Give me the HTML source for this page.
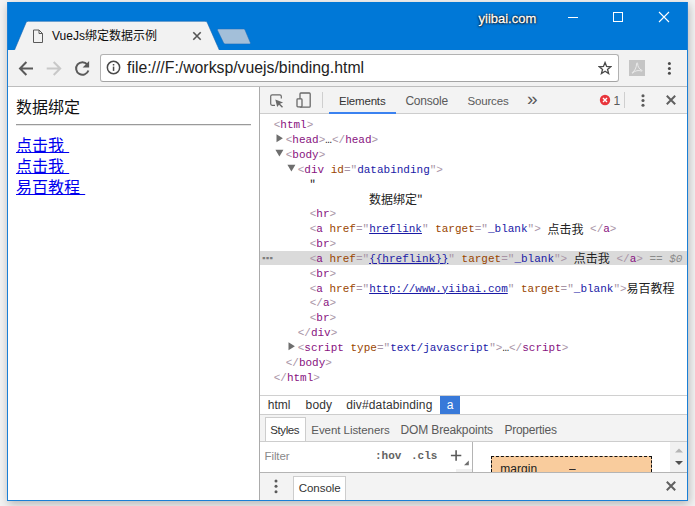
<!DOCTYPE html>
<html>
<head>
<meta charset="utf-8">
<title>VueJs绑定数据示例</title>
<style>
html,body{margin:0;padding:0;}
body{width:695px;height:506px;overflow:hidden;background:#f3f3f3;position:relative;
  font-family:"Liberation Sans","Noto Sans CJK SC",sans-serif;}
*{box-sizing:border-box;}
.abs{position:absolute;}
#shadow{position:absolute;left:7px;top:2px;width:681px;height:499px;box-shadow:1px 3px 9px 0px rgba(0,0,0,0.26);}
#win{position:absolute;left:7px;top:2px;width:681px;height:499px;background:#fff;border:1px solid #1a7fd6;border-top:none;overflow:hidden;}
#titlebar{position:absolute;left:-1px;top:0;width:681px;height:48px;background:#0078d7;}
#toolbar{position:absolute;left:0;top:48px;width:679px;height:37px;background:#f2f2f2;border-bottom:1px solid #bdbdbd;}
#urlbox{position:absolute;left:92px;top:4px;width:519px;height:28px;background:#fff;border:1px solid #b2b2b2;border-bottom-color:#a4a4a4;border-radius:3px;}
#url{position:absolute;left:119px;top:8px;font-size:15.8px;color:#222;white-space:nowrap;letter-spacing:0px;line-height:20px;}
#page{position:absolute;left:0;top:85px;width:252px;height:413px;background:#fff;}
#dev{position:absolute;left:251px;top:85px;width:428px;height:413px;background:#fff;border-left:1px solid #ababab;}
#L{position:absolute;left:-8px;top:-2px;width:695px;height:506px;}
.cjk{font-family:"Noto Sans CJK SC","Liberation Sans",sans-serif;}
#page .t{position:absolute;left:8px;font-size:16px;line-height:20px;white-space:nowrap;color:#111;}
#page a.t{color:#0000ee;text-decoration:underline;}
.ui{font-family:"Liberation Sans","Noto Sans CJK SC",sans-serif;font-size:12px;color:#333;white-space:nowrap;}
.code{font-family:"Liberation Mono","Noto Sans CJK SC",monospace;font-size:11px;white-space:pre;color:#222;line-height:15px;position:absolute;letter-spacing:0px;}
.tag{color:#881280;}
.an{color:#994500;}
.av{color:#1a1aa6;}
.lk{color:#1a1aa6;text-decoration:underline;}
.gr{color:#a8a8a8;}
.b{color:#a894a6;}
.el{color:#222;}
.d0{color:#8a8a8a;font-style:italic;}
.tx{color:#222;font-family:"Noto Sans CJK SC","Liberation Sans",sans-serif;font-size:12px;display:inline-block;height:15px;line-height:15px;vertical-align:top;position:relative;top:-1.5px;}
</style>
</head>
<body>
<div id="shadow"></div>
<div id="win">
  <div id="titlebar">
    <!-- tab -->
    <svg class="abs" style="left:0;top:0" width="681" height="48" viewBox="0 0 681 48">
      <path d="M7.5 48 L19 20.7 Q19.7 19.3 21.3 19.3 L198 19.3 Q199.6 19.3 200.3 20.7 L212.3 48 Z" fill="#f2f2f2"/>
      <path d="M7.5 48 L19 20.7 Q19.7 19.3 21.3 19.3 L198 19.3 Q199.6 19.3 200.3 20.7 L212.3 48" fill="none" stroke="#1565b0" stroke-width="0.6"/>
      <path d="M211.3 27 L236.6 27 Q237.5 27 237.9 27.8 L243.3 40.6 Q243.8 41.9 242.6 41.9 L218 41.9 Q217.1 41.9 216.7 41.1 L210.6 28.4 Q210.2 27 211.3 27 Z" fill="#a3bfd9" stroke="#1a6bb8" stroke-width="0.5"/>
      <!-- page icon -->
      <path d="M26.5 28 L32 28 L35.5 31.5 L35.5 40.5 L26.5 40.5 Z M32 28 L32 31.5 L35.5 31.5" fill="none" stroke="#5a5a5a" stroke-width="1"/>
      <!-- tab close -->
      <path d="M186.3 30.3 L193.7 37.7 M193.7 30.3 L186.3 37.7" stroke="#555" stroke-width="1.6" fill="none"/>
      <!-- window controls -->
      <path d="M561 15.5 L571 15.5" stroke="#fff" stroke-width="1"/>
      <rect x="606.5" y="10.5" width="9" height="9" fill="none" stroke="#fff" stroke-width="1"/>
      <path d="M652 10 L662 20 M662 10 L652 20" stroke="#fff" stroke-width="1.1"/>
    </svg>
    <div class="abs cjk" style="left:45px;top:24px;font-size:12px;line-height:18px;color:#0c0c0c;white-space:nowrap;"><span style="font-family:'Liberation Sans',sans-serif">VueJs</span>绑定数据示例</div>
    <div class="abs" style="left:471.5px;top:9px;font-size:13px;line-height:16px;color:#fff;white-space:nowrap;letter-spacing:0px;-webkit-text-stroke:0.3px #fff;text-shadow:0 0 1px rgba(0,0,0,1),0 0 2px rgba(0,0,0,0.9),0 0 3px rgba(0,0,0,0.5),0 1px 2px rgba(0,0,0,0.5);">yiibai.com</div>
  </div>
  <div id="toolbar">
    <svg class="abs" style="left:0;top:-0.4px" width="100" height="37" viewBox="0 0 100 37">
      <path d="M25 18.5 L12.6 18.5 M18.4 12 L12 18.5 L18.4 25" fill="none" stroke="#5a5a5a" stroke-width="2"/>
      <path d="M38.7 18.5 L51.7 18.5 M45.7 12 L52.2 18.5 L45.7 25" fill="none" stroke="#c8c8c8" stroke-width="2"/>
      <g transform="translate(-0.9,0)"><path d="M80.2 14.5 A6.3 6.3 0 1 0 81.3 20.5" fill="none" stroke="#5a5a5a" stroke-width="2"/>
      <path d="M82 11 L82 17.5 L75.5 17.5 Z" fill="#5a5a5a"/></g>
    </svg>
    <div id="urlbox"></div>
    <svg class="abs" style="left:98.4px;top:10.4px" width="16" height="16" viewBox="0 0 16 16">
      <circle cx="7.5" cy="7.5" r="6.15" fill="none" stroke="#4a4a4a" stroke-width="1.5"/>
      <rect x="6.8" y="6.6" width="1.5" height="4.3" fill="#4a4a4a"/>
      <rect x="6.8" y="4" width="1.5" height="1.5" fill="#4a4a4a"/>
    </svg>
    <div id="url">file:///F:/worksp/vuejs/binding.html</div>
    <svg class="abs" style="left:590.05px;top:10.95px" width="14.1" height="14.1" viewBox="0 0 18 18">
      <path d="M9 2 L11 7 L16.3 7.3 L12.2 10.7 L13.6 16 L9 13 L4.4 16 L5.8 10.7 L1.7 7.3 L7 7 Z" fill="none" stroke="#4a4a4a" stroke-width="1.7" stroke-linejoin="miter"/>
    </svg>
    <div class="abs" style="left:621px;top:10.2px;width:16px;height:15.6px;background:#c5c5c5;"></div>
    <svg class="abs" style="left:621px;top:10.2px" width="16" height="15.6" viewBox="0 0 16 15.6">
      <path d="M3.2 12.6 C5.6 11.2 7.6 7.6 7.6 3.6 C7.6 2.4 8.6 2.4 8.6 3.6 C8.6 6.4 10.4 9.4 12.6 10.2 C13.6 10.6 13.2 11.4 12.2 11 C9.6 10 6 10.6 3.8 12.9 C3.2 13.5 2.6 13 3.2 12.6 Z" fill="none" stroke="#ededed" stroke-width="0.9"/>
    </svg>
    <svg class="abs" style="left:657px;top:9px" width="10" height="20" viewBox="0 0 10 20">
      <circle cx="4.4" cy="4.5" r="1.5" fill="#4a4a4a"/><circle cx="4.4" cy="9.4" r="1.5" fill="#4a4a4a"/><circle cx="4.4" cy="14.3" r="1.5" fill="#4a4a4a"/>
    </svg>
  </div>
  <div id="page">
    <div class="t cjk" style="top:9px;">数据绑定</div>
    <div class="abs" style="left:8px;top:37px;width:235px;height:2px;border-top:1px solid #9a9a9a;border-bottom:1px solid #e6e6e6;"></div>
    <a class="t cjk" style="top:47px;word-spacing:1.6px;">点击我&nbsp;</a>
    <a class="t cjk" style="top:68px;word-spacing:1.6px;">点击我&nbsp;</a>
    <a class="t cjk" style="top:89px;word-spacing:1.6px;">易百教程&nbsp;</a>
  </div>
  <div id="dev"></div>
  <div id="L">
    <!-- devtools toolbar -->
    <div class="abs" style="left:260px;top:87px;width:428px;height:27px;background:#f3f3f3;border-bottom:1px solid #cdcdcd;"></div>
    <svg class="abs" style="left:268px;top:92px" width="48" height="18" viewBox="0 0 48 18">
      <path d="M7 13.3 L4.2 13.3 Q2.7 13.3 2.7 11.8 L2.7 4.3 Q2.7 2.8 4.2 2.8 L11.8 2.8 Q13.3 2.8 13.3 4.3 L13.3 6.6" fill="none" stroke="#6a6a6a" stroke-width="1.2"/>
      <path d="M7.3 7.4 L15.1 10.4 L12 11.7 L15 14.7 L14 15.7 L11 12.7 L9.2 15 Z" fill="#6a6a6a"/>
      <rect x="32" y="1" width="10.2" height="14.2" rx="0.9" fill="none" stroke="#6a6a6a" stroke-width="1.3"/>
      <rect x="29" y="6.9" width="5" height="8" rx="0.8" fill="#f3f3f3" stroke="#6a6a6a" stroke-width="1.3"/>
    </svg>
    <div class="abs" style="left:322px;top:92px;width:1px;height:16px;background:#cfcfcf;"></div>
    <div class="abs" style="left:329px;top:112px;width:67px;height:2px;background:#3b82f0;"></div>
    <svg class="abs" style="left:599px;top:94px" width="12" height="12" viewBox="0 0 12 12">
      <circle cx="6" cy="6" r="5.2" fill="#e8353c"/>
      <path d="M4 4 L8 8 M8 4 L4 8" stroke="#fff" stroke-width="1.4"/>
    </svg>
    <div class="abs" style="left:624px;top:92px;width:1px;height:16px;background:#cfcfcf;"></div>
    <svg class="abs" style="left:639.3px;top:93px" width="8" height="16" viewBox="0 0 8 16">
      <circle cx="4" cy="2.8" r="1.55" fill="#5a5a5a"/><circle cx="4" cy="7.5" r="1.55" fill="#5a5a5a"/><circle cx="4" cy="12.3" r="1.55" fill="#5a5a5a"/>
    </svg>
    <svg class="abs" style="left:665px;top:94px" width="12" height="12" viewBox="0 0 12 12">
      <path d="M1.8 1.8 L10.2 10.2 M10.2 1.8 L1.8 10.2" stroke="#606060" stroke-width="2"/>
    </svg>
    <!-- code -->
    <div class="code" style="left:273.7px;top:118.00px;"><span class="b">&lt;</span><span class="tag">html</span><span class="b">&gt;</span></div>
    <svg class="abs" style="left:276.4px;top:134.17px" width="8" height="9" viewBox="0 0 8 9"><path d="M0.5 0.3 L6.9 4.3 L0.5 8.3 Z" fill="#6e6e6e"/></svg>
    <div class="code" style="left:285.7px;top:132.87px;"><span class="b">&lt;</span><span class="tag">head</span><span class="b">&gt;</span><span class="el">…</span><span class="b">&lt;/</span><span class="tag">head</span><span class="b">&gt;</span></div>
    <svg class="abs" style="left:275.2px;top:149.04px" width="9" height="8" viewBox="0 0 9 8"><path d="M0.4 0.8 L8.4 0.8 L4.4 7.5 Z" fill="#6e6e6e"/></svg>
    <div class="code" style="left:285.7px;top:147.74px;"><span class="b">&lt;</span><span class="tag">body</span><span class="b">&gt;</span></div>
    <svg class="abs" style="left:287.2px;top:163.91px" width="9" height="8" viewBox="0 0 9 8"><path d="M0.4 0.8 L8.4 0.8 L4.4 7.5 Z" fill="#6e6e6e"/></svg>
    <div class="code" style="left:297.7px;top:162.61px;"><span class="b">&lt;</span><span class="tag">div</span> <span class="an">id</span><span class="b">="</span><span class="av">databinding</span><span class="b">"</span><span class="b">&gt;</span></div>
    <div class="code" style="left:309.7px;top:177.48px;"><span class="tx">"</span></div>
    <div class="code" style="left:309.7px;top:192.35px;">         <span class="tx">数据绑定"</span></div>
    <div class="code" style="left:309.7px;top:207.22px;"><span class="b">&lt;</span><span class="tag">hr</span><span class="b">&gt;</span></div>
    <div class="code" style="left:309.7px;top:222.09px;"><span class="b">&lt;</span><span class="tag">a</span> <span class="an">href</span><span class="b">="</span><span class="lk">hreflink</span><span class="b">"</span> <span class="an">target</span><span class="b">="</span><span class="av">_blank</span><span class="b">"</span><span class="b">&gt;</span> <span class="tx">点击我</span> <span class="b">&lt;/</span><span class="tag">a</span><span class="b">&gt;</span></div>
    <div class="code" style="left:309.7px;top:236.96px;"><span class="b">&lt;</span><span class="tag">br</span><span class="b">&gt;</span></div>
    <div class="abs" style="left:260px;top:251px;width:428px;height:14px;background:#dadada;"></div>
    <div class="abs" style="left:261.7px;top:247px;font-family:'Liberation Sans',sans-serif;font-weight:bold;font-size:11.6px;line-height:15px;color:#7c7c7c;-webkit-text-stroke:0.7px #7c7c7c;">…</div>
    <div class="code" style="left:309.7px;top:251.83px;"><span class="b">&lt;</span><span class="tag">a</span> <span class="an">href</span><span class="b">="</span><span class="lk">{{hreflink}}</span><span class="b">"</span> <span class="an">target</span><span class="b">="</span><span class="av">_blank</span><span class="b">"</span><span class="b">&gt;</span> <span class="tx">点击我</span> <span class="b">&lt;/</span><span class="tag">a</span><span class="b">&gt;</span><span class="d0"> == $0</span></div>
    <div class="code" style="left:309.7px;top:266.70px;"><span class="b">&lt;</span><span class="tag">br</span><span class="b">&gt;</span></div>
    <div class="code" style="left:309.7px;top:281.57px;"><span class="b">&lt;</span><span class="tag">a</span> <span class="an">href</span><span class="b">="</span><span class="lk">http://www.yiibai.com</span><span class="b">"</span> <span class="an">target</span><span class="b">="</span><span class="av">_blank</span><span class="b">"</span><span class="b">&gt;</span><span class="tx">易百教程</span></div>
    <div class="code" style="left:309.7px;top:296.44px;"><span class="b">&lt;/</span><span class="tag">a</span><span class="b">&gt;</span></div>
    <div class="code" style="left:309.7px;top:311.31px;"><span class="b">&lt;</span><span class="tag">br</span><span class="b">&gt;</span></div>
    <div class="code" style="left:297.7px;top:326.18px;"><span class="b">&lt;/</span><span class="tag">div</span><span class="b">&gt;</span></div>
    <svg class="abs" style="left:288.4px;top:342.35px" width="8" height="9" viewBox="0 0 8 9"><path d="M0.5 0.3 L6.9 4.3 L0.5 8.3 Z" fill="#6e6e6e"/></svg>
    <div class="code" style="left:297.7px;top:341.05px;"><span class="b">&lt;</span><span class="tag">script</span> <span class="an">type</span><span class="b">="</span><span class="av">text/javascript</span><span class="b">"</span><span class="b">&gt;</span><span class="el">…</span><span class="b">&lt;/</span><span class="tag">script</span><span class="b">&gt;</span></div>
    <div class="code" style="left:285.7px;top:355.92px;"><span class="b">&lt;/</span><span class="tag">body</span><span class="b">&gt;</span></div>
    <div class="code" style="left:273.7px;top:370.79px;"><span class="b">&lt;/</span><span class="tag">html</span><span class="b">&gt;</span></div>
    <!-- breadcrumbs -->
    <div class="abs" style="left:260px;top:395px;width:428px;height:1px;background:#d0d0d0;"></div>
    <div class="abs" style="left:440px;top:396px;width:20px;height:18px;background:#3879d9;"></div>
    <!-- styles tabs -->
    <div class="abs" style="left:260px;top:414px;width:428px;height:28px;background:#f3f3f3;border-top:1px solid #cdcdcd;border-bottom:1px solid #cdcdcd;"></div>
    <div class="abs" style="left:265px;top:417px;width:41px;height:24px;background:#fff;border:1px solid #cdcdcd;border-bottom:none;"></div>
    <!-- filter row -->
    <div class="abs" style="left:375px;top:448px;font-family:'Liberation Mono',monospace;font-weight:bold;font-size:11px;line-height:16px;color:#626262;white-space:pre;">:hov</div>
    <div class="abs" style="left:411px;top:448px;font-family:'Liberation Mono',monospace;font-weight:bold;font-size:11px;line-height:16px;color:#626262;white-space:pre;">.cls</div>
    <svg class="abs" style="left:450px;top:448.6px" width="20" height="20" viewBox="0 0 20 20">
      <path d="M6.1 1.3 L6.1 11.7 M0.9 6.5 L11.3 6.5" stroke="#5a5a5a" stroke-width="1.6"/>
      <path d="M18.8 11.4 L18.8 16.2 L14 16.2 Z" fill="#6e6e6e"/>
    </svg>
    <div class="abs" style="left:456px;top:469px;width:16px;height:3px;background:#f0f0f0;"></div>
    <div class="abs" style="left:472px;top:442px;width:1px;height:30px;background:#b4b4b4;"></div>
    <!-- box model -->
    <div class="abs" style="left:491px;top:456px;width:160.6px;height:16px;background:#f9cc9d;border:1px dashed #111;border-bottom:none;"></div>
    <!-- scrollbar -->
    <div class="abs" style="left:670px;top:442px;width:18px;height:30px;background:#f1f1f1;"></div>
    <svg class="abs" style="left:673px;top:446px" width="12" height="22" viewBox="0 0 12 22">
      <path d="M2 6.5 L6 2.5 L10 6.5 Z" fill="#b4b4b4"/>
      <path d="M2 15 L6 19 L10 15 Z" fill="#505050"/>
    </svg>
    <!-- drawer -->
    <div class="abs" style="left:260px;top:472px;width:428px;height:29px;background:#f3f3f3;border-top:1px solid #b4b4b4;"></div>
    <svg class="abs" style="left:272.2px;top:479px" width="8" height="16" viewBox="0 0 8 16">
      <circle cx="4" cy="1.9" r="1.5" fill="#5a5a5a"/><circle cx="4" cy="7.3" r="1.5" fill="#5a5a5a"/><circle cx="4" cy="12.7" r="1.5" fill="#5a5a5a"/>
    </svg>
    <div class="abs" style="left:293px;top:476px;width:53px;height:24px;background:#fff;border:1px solid #cdcdcd;border-bottom:none;"></div>
    <svg class="abs" style="left:665px;top:480px" width="12" height="12" viewBox="0 0 12 12">
      <path d="M1.8 1.8 L10.2 10.2 M10.2 1.8 L1.8 10.2" stroke="#606060" stroke-width="2"/>
    </svg>
    <div class="abs ui" id="u0" style="left:338.90px;top:93px;line-height:16px;color:#333;font-size:11.5px;letter-spacing:-0.171px;">Elements</div>
    <div class="abs ui" id="u1" style="left:405.40px;top:93px;line-height:16px;color:#5a5a5a;font-size:12px;letter-spacing:-0.217px;">Console</div>
    <div class="abs ui" id="u2" style="left:467.50px;top:93px;line-height:16px;color:#5a5a5a;font-size:11.5px;letter-spacing:-0.167px;">Sources</div>
    <div class="abs ui" id="u3" style="left:527.10px;top:91px;line-height:16px;color:#5a5a5a;font-size:19px;letter-spacing:0.000px;">»</div>
    <div class="abs ui" id="u4" style="left:613.60px;top:93px;line-height:16px;color:#5a5a5a;font-size:12px;letter-spacing:0.000px;">1</div>
    <div class="abs ui" id="u5" style="left:267.70px;top:397px;line-height:16px;color:#333;font-size:12px;letter-spacing:0.033px;">html</div>
    <div class="abs ui" id="u6" style="left:305.60px;top:397px;line-height:16px;color:#333;font-size:12px;letter-spacing:0.133px;">body</div>
    <div class="abs ui" id="u7" style="left:346.20px;top:397px;line-height:16px;color:#333;font-size:12px;letter-spacing:0.150px;">div#databinding</div>
    <div class="abs ui" id="u8" style="left:446.80px;top:397px;line-height:16px;color:#fff;font-size:12px;letter-spacing:0.000px;">a</div>
    <div class="abs ui" id="u9" style="left:270.20px;top:422px;line-height:16px;color:#333;font-size:11.5px;letter-spacing:-0.380px;">Styles</div>
    <div class="abs ui" id="u10" style="left:311.30px;top:422px;line-height:16px;color:#5a5a5a;font-size:11.5px;letter-spacing:-0.057px;">Event Listeners</div>
    <div class="abs ui" id="u11" style="left:400.60px;top:422px;line-height:16px;color:#5a5a5a;font-size:12px;letter-spacing:-0.157px;">DOM Breakpoints</div>
    <div class="abs ui" id="u12" style="left:504.40px;top:422px;line-height:16px;color:#5a5a5a;font-size:12px;letter-spacing:-0.233px;">Properties</div>
    <div class="abs ui" id="u13" style="left:264.50px;top:448px;line-height:16px;color:#8a8a8a;font-size:11.5px;letter-spacing:-0.100px;">Filter</div>
    <div class="abs ui" id="u14" style="left:500.30px;top:461px;line-height:16px;color:#222;font-size:12px;letter-spacing:0.020px;height:11px;overflow:hidden;">margin</div>
    <div class="abs ui" id="u15" style="left:569.00px;top:461px;line-height:16px;color:#222;font-size:12px;letter-spacing:0.000px;height:11px;overflow:hidden;">–</div>
    <div class="abs ui" id="u16" style="left:298.70px;top:480px;line-height:16px;color:#333;font-size:11.5px;letter-spacing:-0.033px;">Console</div>
  </div>
</div>
</body>
</html>
